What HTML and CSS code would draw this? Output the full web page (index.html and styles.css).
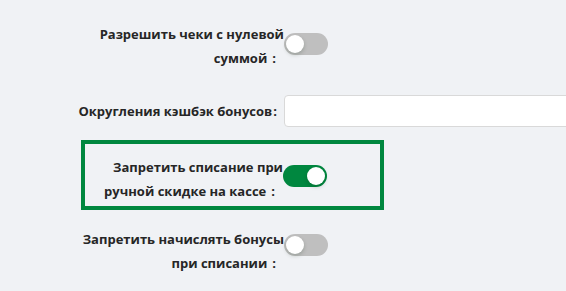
FILE: index.html
```html
<!DOCTYPE html>
<html lang="ru">
<head>
    <meta charset="UTF-8">
    <meta name="viewport" content="width=device-width, initial-scale=1.0">
    <title>Настройки бонусов</title>
    <link rel="stylesheet" href="styles.css">
</head>
<body>
    <div class="settings">
        <!-- Нулевые чеки -->
        <div class="row">
            <label class="label">Разрешить чеки с нулевой<br>суммой<span class="colon">:</span></label>
            <span class="switch"><span class="knob"></span></span>
        </div>

        <!-- Округления -->
        <div class="row row-input">
            <label class="label">Округления кэшбэк бонусов<span class="colon tight">:</span></label>
            <input type="text" class="text-input">
        </div>

        <!-- Ручная скидка -->
        <div class="row row-highlight">
            <label class="label">Запретить списание при<br>ручной скидке на кассе<span class="colon">:</span></label>
            <span class="switch on"><span class="knob"></span></span>
        </div>

        <!-- Начисление при списании -->
        <div class="row row-last">
            <label class="label">Запретить начислять бонусы<br>при списании<span class="colon">:</span></label>
            <span class="switch"><span class="knob"></span></span>
        </div>
    </div>
</body>
</html>
```

FILE: styles.css
```css
/* Global Styles */
body {
    font-family: 'Open Sans', 'Noto Sans', sans-serif;
    margin: 0;
    padding: 0;
    background-color: #F0F2F5;
    color: #262626;
}

.settings {
    padding-top: 22px;
}

/* Rows */
.row {
    display: flex;
    align-items: flex-start;
    margin-left: 74px;
}

.label {
    width: 210px;
    flex-shrink: 0;
    text-align: right;
    font-size: 13px;
    font-weight: 700;
    line-height: 24px;
}

.colon {
    margin: 0 8px 0 5px;
}

.colon.tight {
    margin: 0 7px 0 1px;
}

.row .switch {
    margin-top: 11px;
}

/* Input row */
.row-input {
    margin-top: 25px;
    align-items: center;
}

.text-input {
    flex: 1;
    min-width: 300px;
    height: 32px;
    box-sizing: border-box;
    border: 1px solid #D9D9D9;
    border-radius: 4px;
    background: #fff;
    padding: 4px 11px;
}

/* Highlighted row */
.row-highlight {
    margin-top: 13px;
    margin-left: 81px;
    width: 303px;
    box-sizing: border-box;
    border: 4px solid #00873F;
    padding: 11px 0 3px;
}

.row-highlight .label {
    width: 198px;
}

.row-highlight .switch {
    margin-top: 10px;
}

.row-last {
    margin-top: 17px;
}

.row-last .switch {
    margin-top: 7px;
}

/* Switch */
.switch {
    position: relative;
    display: inline-block;
    width: 44px;
    height: 22px;
    border-radius: 11px;
    background: #BFBFBF;
    flex-shrink: 0;
}

.switch .knob {
    position: absolute;
    top: 2px;
    left: 2px;
    width: 18px;
    height: 18px;
    border-radius: 50%;
    background: #fff;
    box-shadow: 0 2px 4px rgba(0, 35, 11, 0.2);
}

.switch.on {
    background: #00873F;
}

.switch.on .knob {
    left: 24px;
}
```
